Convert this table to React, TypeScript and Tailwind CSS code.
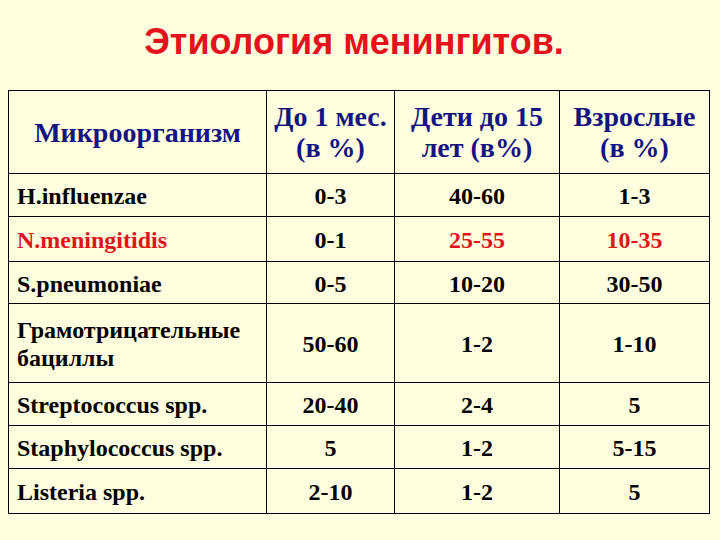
const rows: { name: string[]; a: string; b: string; c: string; red?: boolean; h: string }[] = [
  { name: ["H.influenzae"], a: "0-3", b: "40-60", c: "1-3", h: "h-[43px]" },
  { name: ["N.meningitidis"], a: "0-1", b: "25-55", c: "10-35", red: true, h: "h-[45px]" },
  { name: ["S.pneumoniae"], a: "0-5", b: "10-20", c: "30-50", h: "h-[42px]" },
  { name: ["Грамотрицательные", "бациллы"], a: "50-60", b: "1-2", c: "1-10", h: "h-[79px]" },
  { name: ["Streptococcus spp."], a: "20-40", b: "2-4", c: "5", h: "h-[43px]" },
  { name: ["Staphylococcus spp."], a: "5", b: "1-2", c: "5-15", h: "h-[43px]" },
  { name: ["Listeria spp."], a: "2-10", b: "1-2", c: "5", h: "h-[45px]" },
];

export default function App() {
  return (
    <div className="w-[720px] h-[540px] bg-[#ffffe0] overflow-hidden">
      <div className="h-[90px] pt-[22px] pr-[12px] text-center">
        <h1 className="font-['Liberation_Sans'] font-bold text-[36px] leading-[40px] text-[#e3121c]">
          Этиология менингитов.
        </h1>
      </div>

      <table className="ml-[8px] w-[701px] table-fixed border-collapse border border-black font-['Liberation_Serif'] font-bold">
        <colgroup>
          <col className="w-[258px]" />
          <col className="w-[128px]" />
          <col className="w-[165px]" />
          <col className="w-[150px]" />
        </colgroup>
        <thead>
          <tr className="h-[83px] text-[#141480] text-[28px] leading-[31px]">
            <th className="border border-black font-bold align-middle">Микроорганизм</th>
            <th className="border border-black font-bold align-middle">
              До 1 мес.
              <br />
              (в %)
            </th>
            <th className="border border-black font-bold align-middle">
              Дети до 15
              <br />
              лет (в%)
            </th>
            <th className="border border-black font-bold align-middle">
              Взрослые
              <br />
              (в %)
            </th>
          </tr>
        </thead>
        <tbody className="text-[24px] leading-[28px] text-black">
          {rows.map((r) => (
            <tr key={r.name[0]} className={r.h}>
              <td className={`border border-black pl-[8px] pt-[2px] align-middle ${r.red ? "text-[#e0141c]" : ""}`}>
                {r.name.map((n, i) => (
                  <div key={i}>{n}</div>
                ))}
              </td>
              <td className="border border-black text-center pt-[2px] align-middle">{r.a}</td>
              <td className={`border border-black text-center pt-[2px] align-middle ${r.red ? "text-[#e0141c]" : ""}`}>{r.b}</td>
              <td className={`border border-black text-center pt-[2px] align-middle ${r.red ? "text-[#e0141c]" : ""}`}>{r.c}</td>
            </tr>
          ))}
        </tbody>
      </table>
    </div>
  );
}
